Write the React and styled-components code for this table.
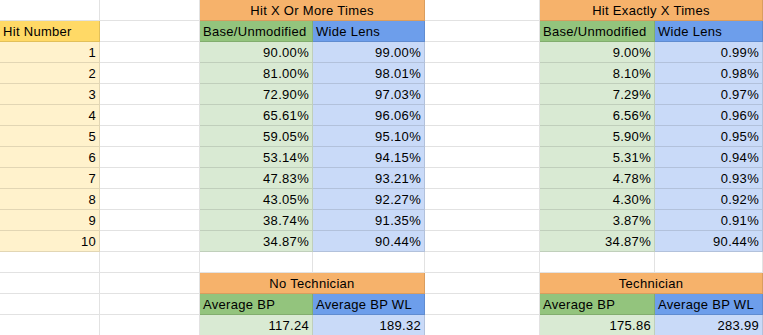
import React from "react";
import styled, { createGlobalStyle } from "styled-components";

const GlobalStyle = createGlobalStyle`
  html, body {
    margin: 0;
    padding: 0;
    background: #fff;
    overflow: hidden;
  }
`;

const COLORS = {
  white: "#ffffff",
  orange: "#f6b26b",
  green: "#93c47d",
  blue: "#6d9eeb",
  lightGreen: "#d9ead3",
  lightBlue: "#c9daf8",
  yellow: "#ffd966",
  lightYellow: "#fff2cc",
};

const Sheet = styled.div`
  display: grid;
  grid-template-columns: 100px 100px 113px 112px 115px 115px 108px;
  grid-auto-rows: 21px;
  font-family: "Liberation Sans", Arial, sans-serif;
  font-size: 13px;
  letter-spacing: 0.3px;
  color: #000;
`;

const Cell = styled.div`
  box-sizing: border-box;
  grid-column: ${(p) => (p.$span ? `span ${p.$span}` : "auto")};
  background: ${(p) => COLORS[p.$bg || "white"]};
  border-right: 1px solid rgba(0, 0, 0, 0.115);
  border-bottom: 1px solid rgba(0, 0, 0, 0.115);
  display: flex;
  align-items: flex-end;
  justify-content: ${(p) =>
    p.$align === "right" ? "flex-end" : p.$align === "center" ? "center" : "flex-start"};
  padding: 0 3px 2px 3px;
  line-height: 15px;
  white-space: nowrap;
  overflow: hidden;
`;

const hitOrMore = [
  ["90.00%", "99.00%"],
  ["81.00%", "98.01%"],
  ["72.90%", "97.03%"],
  ["65.61%", "96.06%"],
  ["59.05%", "95.10%"],
  ["53.14%", "94.15%"],
  ["47.83%", "93.21%"],
  ["43.05%", "92.27%"],
  ["38.74%", "91.35%"],
  ["34.87%", "90.44%"],
];

const hitExactly = [
  ["9.00%", "0.99%"],
  ["8.10%", "0.98%"],
  ["7.29%", "0.97%"],
  ["6.56%", "0.96%"],
  ["5.90%", "0.95%"],
  ["5.31%", "0.94%"],
  ["4.78%", "0.93%"],
  ["4.30%", "0.92%"],
  ["3.87%", "0.91%"],
  ["34.87%", "90.44%"],
];

export default function App() {
  return (
    <>
      <GlobalStyle />
      <Sheet>
        {/* row 1 */}
        <Cell />
        <Cell />
        <Cell $span={2} $bg="orange" $align="center">Hit X Or More Times</Cell>
        <Cell />
        <Cell $span={2} $bg="orange" $align="center">Hit Exactly X Times</Cell>

        {/* row 2 */}
        <Cell $bg="yellow">Hit Number</Cell>
        <Cell />
        <Cell $bg="green">Base/Unmodified</Cell>
        <Cell $bg="blue">Wide Lens</Cell>
        <Cell />
        <Cell $bg="green">Base/Unmodified</Cell>
        <Cell $bg="blue">Wide Lens</Cell>

        {hitOrMore.map((row, i) => (
          <React.Fragment key={i}>
            <Cell $bg="lightYellow" $align="right">{i + 1}</Cell>
            <Cell />
            <Cell $bg="lightGreen" $align="right">{row[0]}</Cell>
            <Cell $bg="lightBlue" $align="right">{row[1]}</Cell>
            <Cell />
            <Cell $bg="lightGreen" $align="right">{hitExactly[i][0]}</Cell>
            <Cell $bg="lightBlue" $align="right">{hitExactly[i][1]}</Cell>
          </React.Fragment>
        ))}

        {/* empty row */}
        <Cell />
        <Cell />
        <Cell />
        <Cell />
        <Cell />
        <Cell />
        <Cell />

        {/* technician block */}
        <Cell />
        <Cell />
        <Cell $span={2} $bg="orange" $align="center">No Technician</Cell>
        <Cell />
        <Cell $span={2} $bg="orange" $align="center">Technician</Cell>

        <Cell />
        <Cell />
        <Cell $bg="green">Average BP</Cell>
        <Cell $bg="blue">Average BP WL</Cell>
        <Cell />
        <Cell $bg="green">Average BP</Cell>
        <Cell $bg="blue">Average BP WL</Cell>

        <Cell />
        <Cell />
        <Cell $bg="lightGreen" $align="right">117.24</Cell>
        <Cell $bg="lightBlue" $align="right">189.32</Cell>
        <Cell />
        <Cell $bg="lightGreen" $align="right">175.86</Cell>
        <Cell $bg="lightBlue" $align="right">283.99</Cell>
      </Sheet>
    </>
  );
}
